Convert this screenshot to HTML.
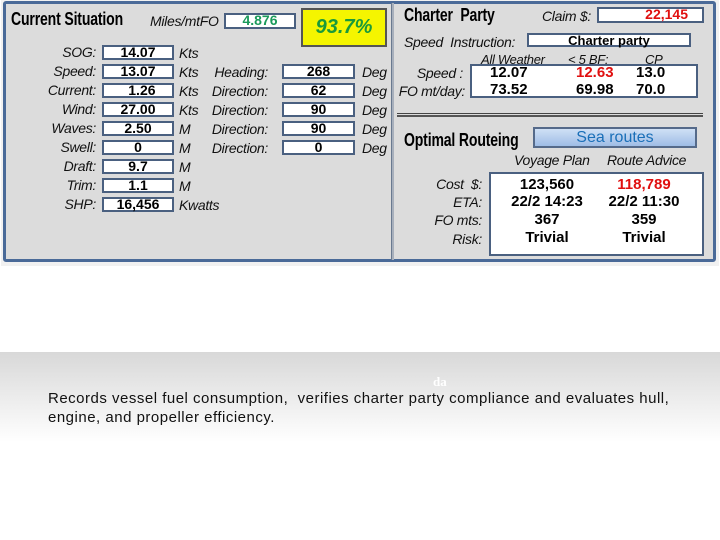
<!DOCTYPE html>
<html><head><style>
*{margin:0;padding:0;box-sizing:border-box}
body{width:720px;height:540px;background:#fff;position:relative;overflow:hidden;font-family:"Liberation Sans",Arial,sans-serif}
.a{position:absolute;white-space:nowrap}
.lbl{font-style:italic;font-size:14px;color:#111;text-align:right;letter-spacing:-.3px}
.u{font-style:italic;font-size:14px;color:#111;letter-spacing:-.3px}
.box{position:absolute;background:#fff;border:2px solid #4a6080;font-weight:bold;font-size:14px;text-align:center;line-height:11px;color:#000}
.h{font-weight:bold;font-size:18px;transform:scaleX(.78);transform-origin:left;letter-spacing:-.2px}
.v{position:absolute;font-weight:bold;font-size:15px;white-space:nowrap}
</style></head><body>
<div class="a" style="left:1px;top:0;width:718px;height:266px;background:#f1f1f1"></div>
<div class="a" style="left:3px;top:1px;width:713px;height:261px;background:#dcdcdc;border:3px solid #4a6a98;border-radius:3px"></div>
<div class="a" style="left:391px;top:3px;width:3px;height:257px;background:#a8b0bc;border-left:1px solid #6a7a90"></div>

<div class="a h" style="left:11px;top:9px">Current Situation</div>
<div class="a u" style="left:150px;top:13px">Miles/mtFO</div>
<div class="box" style="left:224px;top:13px;width:72px;height:16px;color:#1a9a5a">4.876</div>
<div class="a" style="left:301px;top:8px;width:86px;height:39px;background:#f5f500;border:2px solid #555;font-weight:bold;font-style:italic;font-size:20px;color:#1a9a3a;text-align:center;line-height:34px">93.7%</div>

<div class="a lbl" style="left:20px;top:44px;width:76px">SOG:</div>
<div class="a lbl" style="left:20px;top:63px;width:76px">Speed:</div>
<div class="a lbl" style="left:20px;top:82px;width:76px">Current:</div>
<div class="a lbl" style="left:20px;top:101px;width:76px">Wind:</div>
<div class="a lbl" style="left:20px;top:120px;width:76px">Waves:</div>
<div class="a lbl" style="left:20px;top:139px;width:76px">Swell:</div>
<div class="a lbl" style="left:20px;top:158px;width:76px">Draft:</div>
<div class="a lbl" style="left:20px;top:177px;width:76px">Trim:</div>
<div class="a lbl" style="left:20px;top:196px;width:76px">SHP:</div>

<div class="box" style="left:102px;top:45px;width:72px;height:15px">14.07</div>
<div class="box" style="left:102px;top:64px;width:72px;height:15px">13.07</div>
<div class="box" style="left:102px;top:83px;width:72px;height:15px">&nbsp;&nbsp;1.26</div>
<div class="box" style="left:102px;top:102px;width:72px;height:15px">27.00</div>
<div class="box" style="left:102px;top:121px;width:72px;height:15px">2.50</div>
<div class="box" style="left:102px;top:140px;width:72px;height:15px">0</div>
<div class="box" style="left:102px;top:159px;width:72px;height:15px">9.7</div>
<div class="box" style="left:102px;top:178px;width:72px;height:15px">1.1</div>
<div class="box" style="left:102px;top:197px;width:72px;height:15px">16,456</div>

<div class="a u" style="left:179px;top:45px">Kts</div>
<div class="a u" style="left:179px;top:64px">Kts</div>
<div class="a u" style="left:179px;top:83px">Kts</div>
<div class="a u" style="left:179px;top:102px">Kts</div>
<div class="a u" style="left:179px;top:121px">M</div>
<div class="a u" style="left:179px;top:140px">M</div>
<div class="a u" style="left:179px;top:159px">M</div>
<div class="a u" style="left:179px;top:178px">M</div>
<div class="a u" style="left:179px;top:197px">Kwatts</div>

<div class="a lbl" style="left:190px;top:64px;width:78px">Heading:</div>
<div class="a lbl" style="left:190px;top:83px;width:78px">Direction:</div>
<div class="a lbl" style="left:190px;top:102px;width:78px">Direction:</div>
<div class="a lbl" style="left:190px;top:121px;width:78px">Direction:</div>
<div class="a lbl" style="left:190px;top:140px;width:78px">Direction:</div>
<div class="box" style="left:282px;top:64px;width:73px;height:15px">268</div>
<div class="box" style="left:282px;top:83px;width:73px;height:15px">62</div>
<div class="box" style="left:282px;top:102px;width:73px;height:15px">90</div>
<div class="box" style="left:282px;top:121px;width:73px;height:15px">90</div>
<div class="box" style="left:282px;top:140px;width:73px;height:15px">0</div>
<div class="a u" style="left:362px;top:64px">Deg</div>
<div class="a u" style="left:362px;top:83px">Deg</div>
<div class="a u" style="left:362px;top:102px">Deg</div>
<div class="a u" style="left:362px;top:121px">Deg</div>
<div class="a u" style="left:362px;top:140px">Deg</div>

<div class="a h" style="left:404px;top:5px">Charter&nbsp; Party</div>
<div class="a u" style="left:542px;top:8px">Claim $:</div>
<div class="box" style="left:597px;top:7px;width:107px;height:16px;color:#e01010;text-align:right;padding-right:14px">22,145</div>
<div class="a u" style="left:404px;top:34px;font-size:14px">Speed&nbsp; Instruction:</div>
<div class="box" style="left:527px;top:33px;width:164px;height:14px;font-size:13px">Charter party</div>
<div class="a u" style="left:481px;top:52px;font-size:13px">All Weather</div>
<div class="a u" style="left:568px;top:52px;font-size:13px">&lt; 5 BF:</div>
<div class="a u" style="left:645px;top:52px;font-size:13px">CP</div>
<div class="a lbl" style="left:400px;top:65px;width:63px">Speed :</div>
<div class="a lbl" style="left:390px;top:83px;width:75px">FO mt/day:</div>
<div class="a" style="left:470px;top:64px;width:228px;height:34px;background:#fff;border:2px solid #4a6080"></div>
<div class="v" style="left:490px;top:64px">12.07</div>
<div class="v" style="left:576px;top:64px;color:#e01010">12.63</div>
<div class="v" style="left:636px;top:64px">13.0</div>
<div class="v" style="left:490px;top:81px">73.52</div>
<div class="v" style="left:576px;top:81px">69.98</div>
<div class="v" style="left:636px;top:81px">70.0</div>
<div class="a" style="left:397px;top:113px;width:306px;height:4px;border-top:1px solid #444;border-bottom:2px solid #555"></div>
<div class="a h" style="left:404px;top:130px">Optimal Routeing</div>
<div class="a" style="left:533px;top:127px;width:164px;height:21px;background:linear-gradient(#cfe0f5,#9fbde6);border:2px solid #556a8a;color:#1a6fb8;font-size:16px;text-align:center;line-height:17px">Sea routes</div>
<div class="a u" style="left:514px;top:152px">Voyage Plan</div>
<div class="a u" style="left:607px;top:152px">Route Advice</div>
<div class="a lbl" style="left:420px;top:176px;width:62px">Cost&nbsp; $:</div>
<div class="a lbl" style="left:420px;top:194px;width:62px">ETA:</div>
<div class="a lbl" style="left:420px;top:212px;width:62px">FO mts:</div>
<div class="a lbl" style="left:420px;top:231px;width:62px">Risk:</div>
<div class="a" style="left:489px;top:172px;width:215px;height:84px;background:#fff;border:2px solid #4a6080"></div>
<div class="v" style="left:497px;top:176px;width:100px;text-align:center">123,560</div>
<div class="v" style="left:594px;top:176px;width:100px;text-align:center;color:#e01010">118,789</div>
<div class="v" style="left:497px;top:193px;width:100px;text-align:center">22/2 14:23</div>
<div class="v" style="left:594px;top:193px;width:100px;text-align:center">22/2 11:30</div>
<div class="v" style="left:497px;top:211px;width:100px;text-align:center">367</div>
<div class="v" style="left:594px;top:211px;width:100px;text-align:center">359</div>
<div class="v" style="left:497px;top:229px;width:100px;text-align:center">Trivial</div>
<div class="v" style="left:594px;top:229px;width:100px;text-align:center">Trivial</div>

<div class="a" style="left:0;top:352px;width:720px;height:90px;background:linear-gradient(#d8d8d8,#fff)"></div>
<div class="a" style="left:433px;top:374px;color:#fff;font-weight:bold;font-size:13px;font-family:'Liberation Serif',serif">da</div>
<div class="a" style="left:48px;top:389px;font-size:15px;color:#111;line-height:19px;white-space:normal;width:645px;letter-spacing:0.5px">Records vessel fuel consumption,&nbsp; verifies charter party compliance and evaluates hull, engine, and propeller efficiency.</div>
</body></html>
